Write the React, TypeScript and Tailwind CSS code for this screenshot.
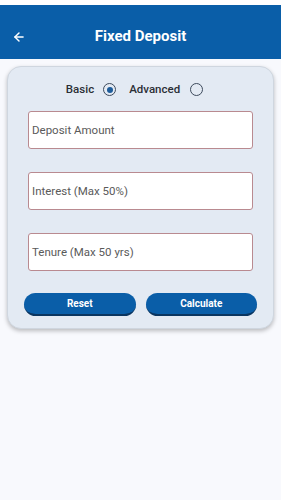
import { ArrowLeft } from "lucide-react";

const fields = ["Deposit Amount", "Interest (Max 50%)", "Tenure (Max 50 yrs)"];

function Radio({ checked }: { checked?: boolean }) {
  return (
    <span className="flex h-[13px] w-[13px] items-center justify-center rounded-full border-[1.5px] border-[#3d4a5c]">
      {checked && <span className="h-[6px] w-[6px] rounded-full bg-[#1d5c9a]" />}
    </span>
  );
}

export default function App() {
  return (
    <div className="min-h-[500px] w-[281px] bg-[#f8f9fd] font-['Roboto',sans-serif]">
      <div className="h-[5px] bg-white" />
      <div className="flex h-[54px] items-center bg-[#0a5ea8] px-[12px] pt-[9px]">
        <ArrowLeft className="h-[14px] w-[14px] text-white" strokeWidth={2.5} />
        <h1 className="flex-1 pr-[14px] text-center text-[15px] font-bold text-white">Fixed Deposit</h1>
      </div>

      <div className="px-[7px] pt-[7px]">
        <div className="rounded-[14px] border border-[#cfd6df] bg-[#e3eaf3] px-[16px] pb-[12px] pt-[14px] shadow-[0_2px_4px_rgba(0,0,0,0.25)]">
          <div className="flex items-center justify-center pr-[12px] text-[11.5px] font-medium text-[#2b2f36]">
            <span>Basic</span>
            <span className="ml-[9px]"><Radio checked /></span>
            <span className="ml-[13px]">Advanced</span>
            <span className="ml-[10px]"><Radio /></span>
          </div>

          <div className="mt-[13px] flex flex-col gap-[23px] px-[4px]">
            {fields.map((f) => (
              <div
                key={f}
                className="flex h-[38px] items-center rounded-[3px] border border-[#b98a90] bg-white px-[3px] text-[11.5px] text-[#5a5a5a]"
              >
                {f}
              </div>
            ))}
          </div>

          <div className="mt-[22px] flex gap-[10px]">
            {["Reset", "Calculate"].map((b) => (
              <button
                key={b}
                className="h-[23px] flex-1 rounded-full border-b-2 border-[#0a3560] bg-[#0a5ea8] text-[10px] font-bold text-white"
              >
                {b}
              </button>
            ))}
          </div>
        </div>
      </div>
    </div>
  );
}
